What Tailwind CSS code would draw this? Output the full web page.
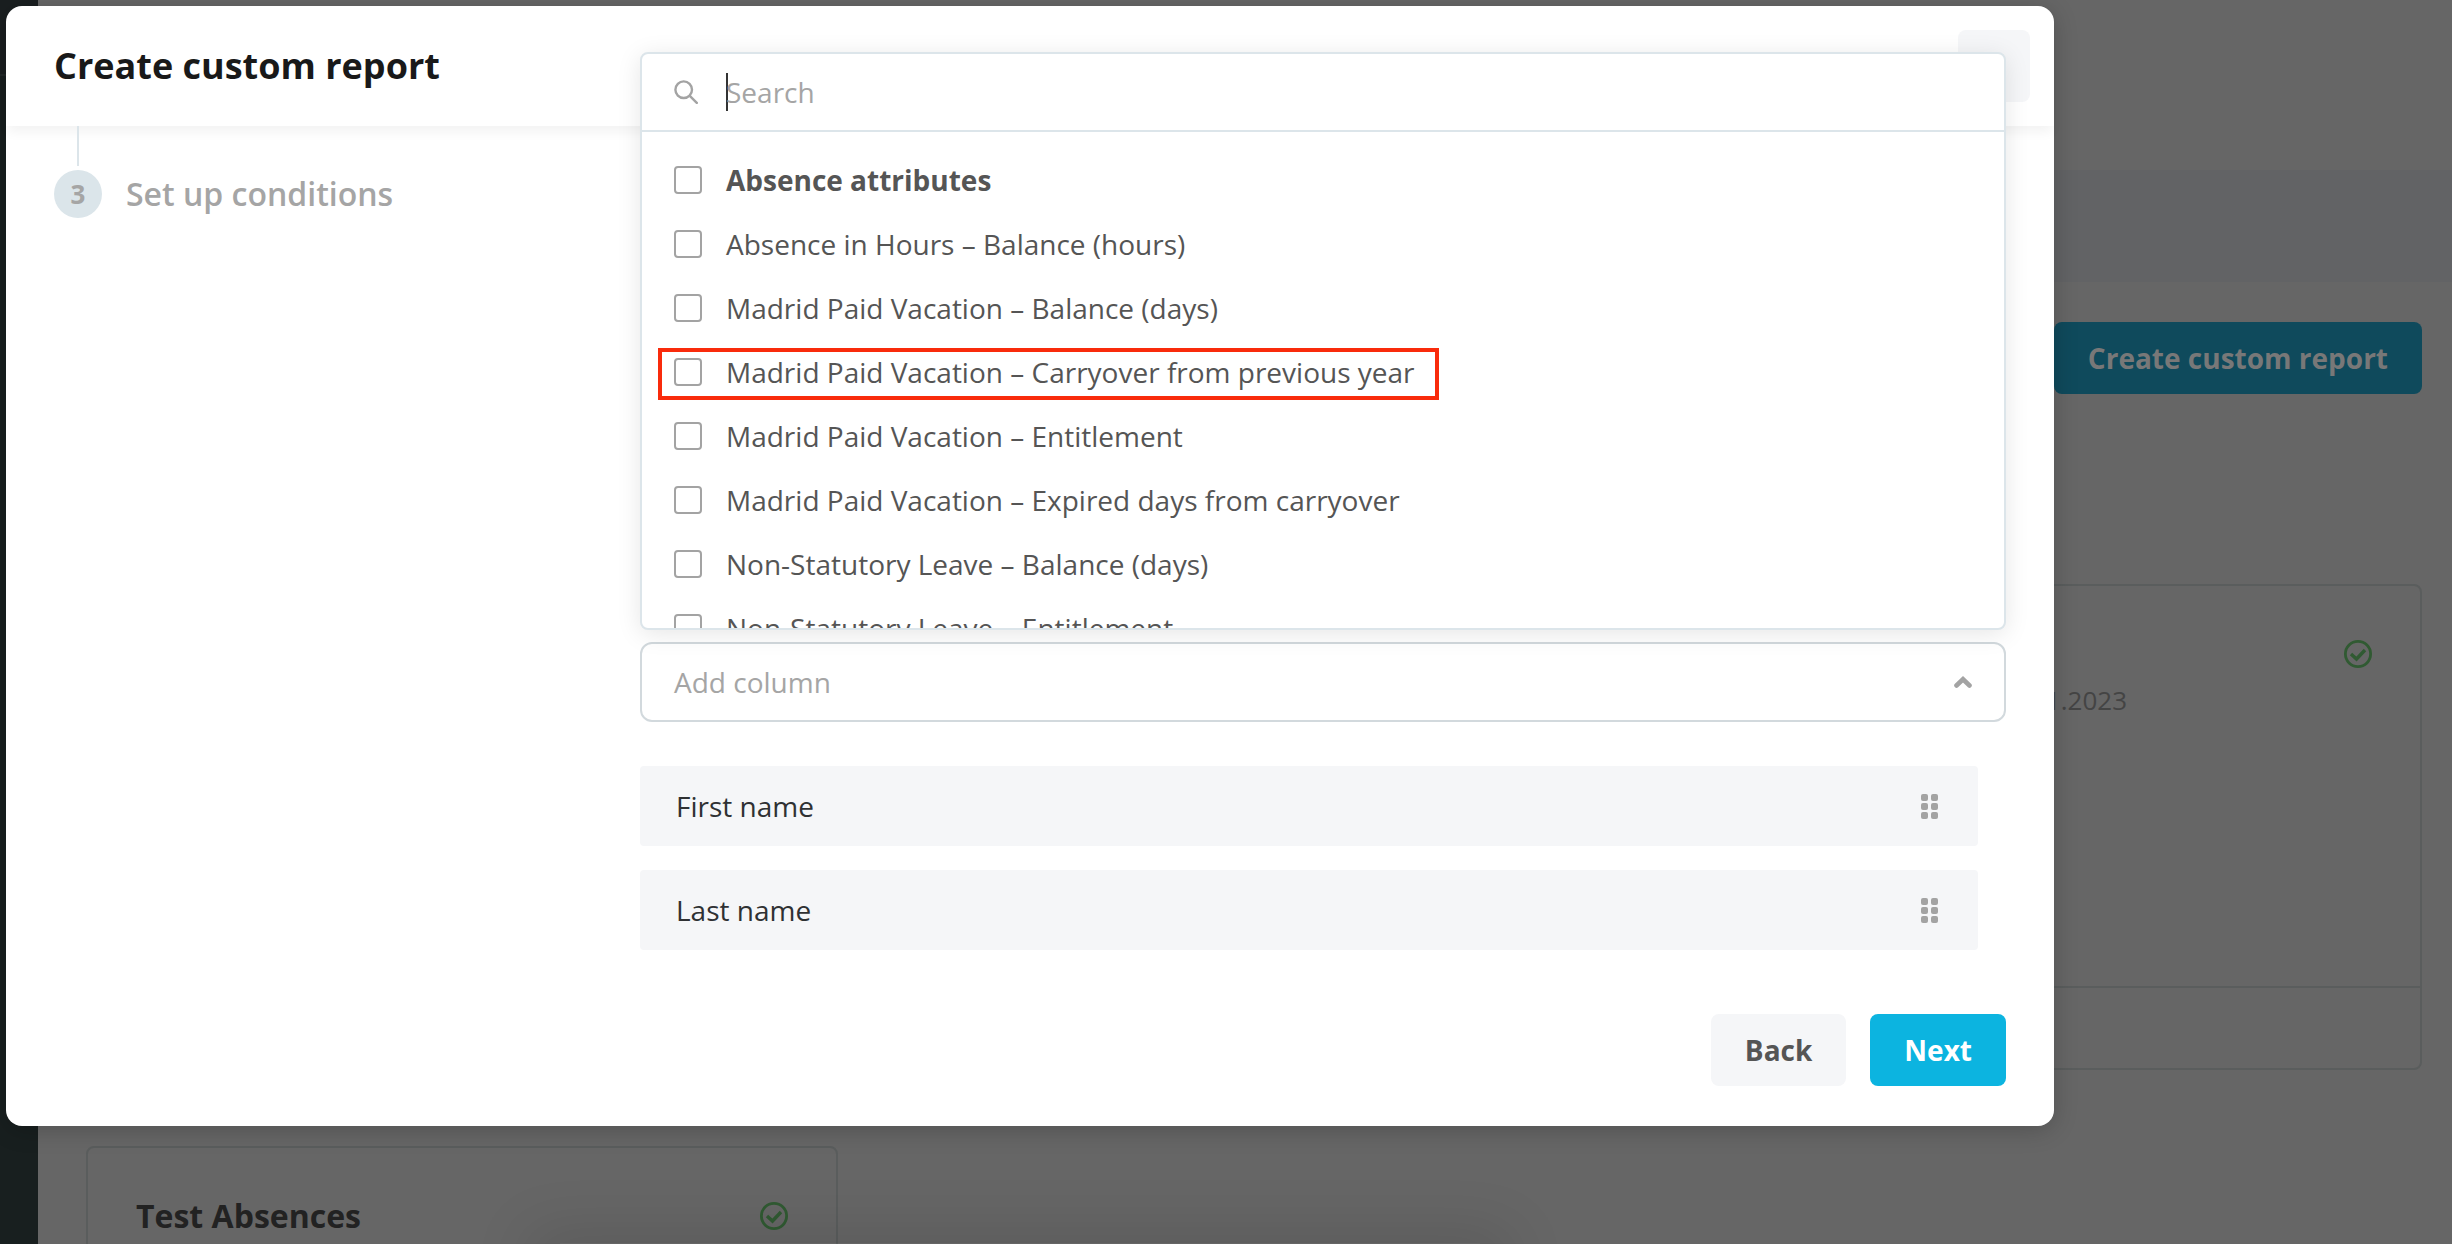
<!DOCTYPE html>
<html lang="en">
<head>
    <meta charset="UTF-8">
    <meta name="viewport" content="width=device-width, initial-scale=1.0">
    <title>Create custom report</title>
    <script src="https://cdn.jsdelivr.net/npm/@tailwindcss/browser@4"></script>
</head>
<body class="relative h-screen overflow-hidden bg-[#666666] font-['Open_Sans','Noto_Sans',sans-serif] text-[28px] leading-10">
    <!-- Page behind the dialog -->
    <div class="flex h-full">
        <aside class="w-[38px] shrink-0 bg-[#181f1f]">
            <div class="h-[76px] border-b-2 border-[#222828] bg-[#1a1f20]"></div>
        </aside>
        <div class="flex-1">
            <div class="h-[170px]"></div>
            <div class="h-28 bg-[#626365]"></div>
            <main class="pt-10 pr-[30px] pl-12">
                <div class="flex justify-end">
                    <button class="h-[72px] rounded-lg bg-[#0f4a5c] px-[34px] font-bold text-[#787878]">Create custom report</button>
                </div>
                <div class="mt-[190px] grid grid-cols-3 gap-x-10 gap-y-[76px]">
                    <article class="col-start-3 flex h-[486px] flex-col rounded-lg border-2 border-[#5a5d5d]">
                        <div class="flex flex-1 justify-between border-b-2 border-[#5a5d5d] px-12 pt-[54px]">
                            <p class="w-[407px] pt-10 text-right text-[26px] text-[#444444]">01.11.2023</p>
                            <svg class="size-7" viewBox="0 0 28 28" fill="none" stroke="#305a32"><circle cx="14" cy="14" r="12.6" stroke-width="2.8"/><path d="M7 14l5.500 5 8.500-9" stroke-width="3.4"/></svg>
                        </div>
                        <div class="h-20"></div>
                    </article>
                    <article class="col-start-1 h-[486px] rounded-lg border-2 border-[#5a5d5d] px-12 pt-12">
                        <div class="flex items-center justify-between">
                            <h2 class="text-[32px] font-bold text-[#222222]">Test Absences</h2>
                            <svg class="size-7" viewBox="0 0 28 28" fill="none" stroke="#305a32"><circle cx="14" cy="14" r="12.6" stroke-width="2.8"/><path d="M7 14l5.500 5 8.500-9" stroke-width="3.4"/></svg>
                        </div>
                    </article>
                </div>
            </main>
        </div>
    </div>

    <!-- Soft shadow at the bottom edge -->
    <div class="absolute bottom-0 left-[560px] h-px w-[920px] shadow-[0_20px_60px_30px_rgba(0,0,0,0.12)]"></div>

    <!-- Dialog -->
    <div role="dialog" aria-labelledby="dialogTitle" class="absolute top-1.5 right-[398px] left-1.5 flex flex-col rounded-2xl bg-white shadow-[0_4px_24px_rgba(0,0,0,0.2)]">
        <header class="flex h-[120px] items-center justify-between rounded-t-2xl pr-6 pl-12 shadow-[0_8px_12px_-2px_rgba(0,0,0,0.05)]">
            <h1 id="dialogTitle" class="text-4xl font-bold text-[#191919]">Create custom report</h1>
            <button aria-label="Close" class="size-[72px] rounded-lg bg-[#f5f6f8]"></button>
        </header>

        <div class="flex px-12">
            <!-- Steps -->
            <div class="w-[586px] shrink-0">
                <div class="ml-[23px] h-10 w-0.5 bg-[#dce5ea]"></div>
                <div class="mt-1 flex items-center gap-6">
                    <span class="flex size-12 items-center justify-center rounded-full bg-[#dbe5ea] text-[26px] font-bold text-[#a5a5a5]">3</span>
                    <span class="text-[32px] font-semibold text-[#a5a5a5]">Set up conditions</span>
                </div>
            </div>

            <div class="relative flex-1 pt-[516px]">
                <button aria-expanded="true" class="flex h-20 w-full items-center justify-between rounded-xl border-2 border-[#d2d9dd] px-8 text-[#a5a5a5]">
                    Add column
                    <svg class="h-3 w-[18px]" viewBox="0 0 18 12" fill="none" stroke="#a3a3a3" stroke-width="4.6" stroke-linecap="round"><path d="M2.500 9.500l6.500-6.200 6.500 6.200"/></svg>
                </button>

                <ul class="mt-11 mr-7 flex flex-col gap-6 text-[#2f3133]">
                    <li class="flex h-20 items-center justify-between rounded bg-[#f5f6f8] pr-10 pl-9">
                        First name
                        <svg class="h-[25px] w-[17px]" viewBox="0 0 17 25" fill="#a3a3a3"><rect width="7" height="7" rx="2"/><rect x="10" width="7" height="7" rx="2"/><rect y="9" width="7" height="7" rx="2"/><rect x="10" y="9" width="7" height="7" rx="2"/><rect y="18" width="7" height="7" rx="2"/><rect x="10" y="18" width="7" height="7" rx="2"/></svg>
                    </li>
                    <li class="flex h-20 items-center justify-between rounded bg-[#f5f6f8] pr-10 pl-9">
                        Last name
                        <svg class="h-[25px] w-[17px]" viewBox="0 0 17 25" fill="#a3a3a3"><rect width="7" height="7" rx="2"/><rect x="10" width="7" height="7" rx="2"/><rect y="9" width="7" height="7" rx="2"/><rect x="10" y="9" width="7" height="7" rx="2"/><rect y="18" width="7" height="7" rx="2"/><rect x="10" y="18" width="7" height="7" rx="2"/></svg>
                    </li>
                </ul>

                <!-- Column picker, opens upwards over the header -->
                <div class="absolute inset-x-0 -top-[74px] flex h-[578px] flex-col overflow-hidden rounded-lg border-2 border-[#dce5ea] bg-white text-[#555555] shadow-[0_4px_24px_rgba(0,0,0,0.1)]">
                    <div class="flex h-[78px] shrink-0 items-center border-b-2 border-[#dce5ea] pl-8">
                        <svg class="size-6" viewBox="0 0 24 24" fill="none" stroke="#a3a3a3" stroke-width="2.4" stroke-linecap="round"><circle cx="9.700" cy="9.700" r="8.300"/><path d="M15.800 15.800l7 7"/></svg>
                        <span class="ml-7 h-[38px] w-0.5 bg-[#333333]"></span>
                        <input type="text" aria-label="Search" placeholder="Search" class="-ml-0.5 h-12 flex-1 outline-none placeholder:text-[#a5a5a5]">
                    </div>
                    <div id="options" class="pt-4 pl-8"></div>
                </div>
            </div>
        </div>

        <footer class="flex justify-end gap-6 px-12 pt-16 pb-10 font-bold">
            <button class="h-[72px] rounded-lg bg-[#f5f6f8] px-[34px] text-[#555555]">Back</button>
            <button class="h-[72px] rounded-lg bg-[#0cb4e0] px-[34px] text-white">Next</button>
        </footer>
    </div>

    <script>
        const columns = [
            'Absence attributes',
            'Absence in Hours – Balance (hours)',
            'Madrid Paid Vacation – Balance (days)',
            'Madrid Paid Vacation – Carryover from previous year',
            'Madrid Paid Vacation – Entitlement',
            'Madrid Paid Vacation – Expired days from carryover',
            'Non-Statutory Leave – Balance (days)',
            'Non-Statutory Leave – Entitlement'
        ];

        document.getElementById('options').innerHTML = columns.map((name, i) => `
            <div class="flex h-16 items-center">
                <label class="relative flex items-center gap-6 ${i === 0 ? 'font-bold' : ''}">
                    <input type="checkbox" class="size-7 appearance-none rounded border-2 border-[#a3a3a3] bg-white">
                    ${name}
                    ${i === 3 ? '<span class="absolute -top-1 -right-6 -bottom-2 -left-4 border-4 border-[#f92b0c]"></span>' : ''}
                </label>
            </div>`).join('');
    </script>
</body>
</html>
